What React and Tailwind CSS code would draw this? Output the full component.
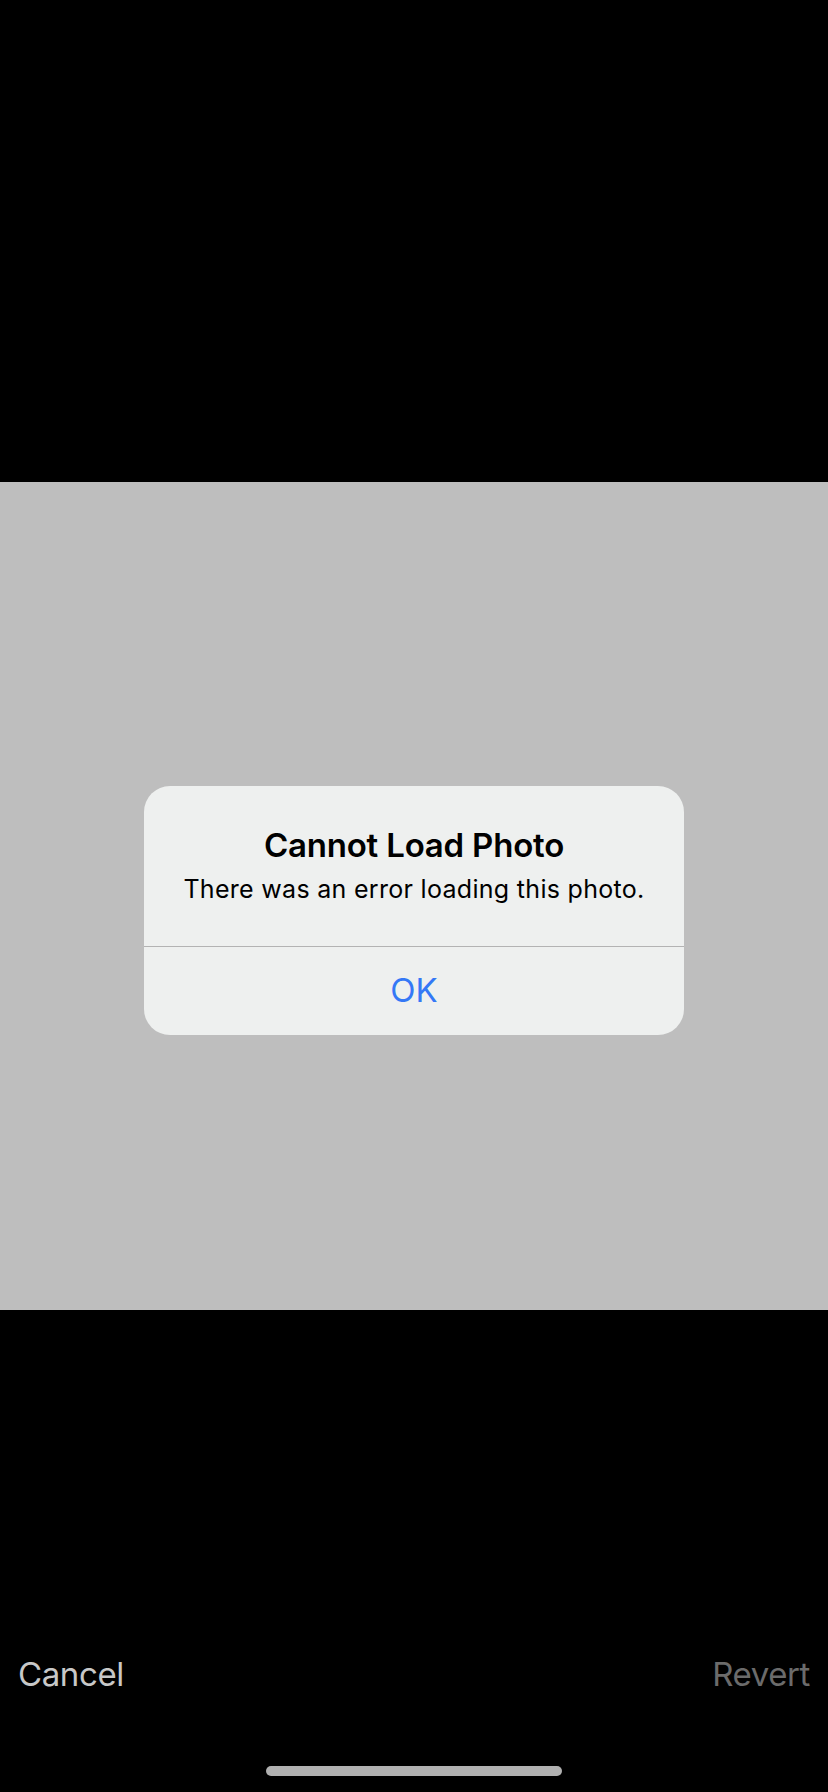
import React from "react";

const App = () => {
  return (
    <div
      className="w-[828px] h-[1792px] bg-black flex flex-col"
      style={{ fontFamily: "Inter, 'Noto Sans', 'Liberation Sans', sans-serif" }}
    >
      {/* top black area */}
      <div className="h-[482px] shrink-0" />

      {/* photo area */}
      <div className="h-[828px] shrink-0 bg-[#bebebe] flex flex-col items-center">
        <div className="mt-[304px] w-[540px] rounded-[26px] bg-[#eef0ef] overflow-hidden">
          <div className="pt-[37px] pb-[41px] px-8 text-center text-black">
            <p className="text-[33px] leading-[44px] font-semibold tracking-[-0.2px]">Cannot Load Photo</p>
            <p className="mt-[6px] text-[25px] leading-[32px] tracking-[0.3px]">There was an error loading this photo.</p>
          </div>
          <div className="h-px bg-[#b3b3b3]" />
          <button className="w-full h-[88px] text-[33px] text-[#3478f6] flex items-center justify-center">
            OK
          </button>
        </div>
      </div>

      {/* bottom toolbar */}
      <div className="flex-1 flex flex-col">
        <div className="mt-[341px] h-[48px] px-[18px] flex items-center justify-between text-[33px] tracking-[-0.4px]">
          <span className="text-[#c8c8c8]">Cancel</span>
          <span className="text-[#6b6b6b]">Revert</span>
        </div>
        <div className="mt-[67px] flex justify-center">
          <div className="w-[296px] h-[10px] rounded-full bg-[#b0b0b0]" />
        </div>
      </div>
    </div>
  );
};

export default App;
